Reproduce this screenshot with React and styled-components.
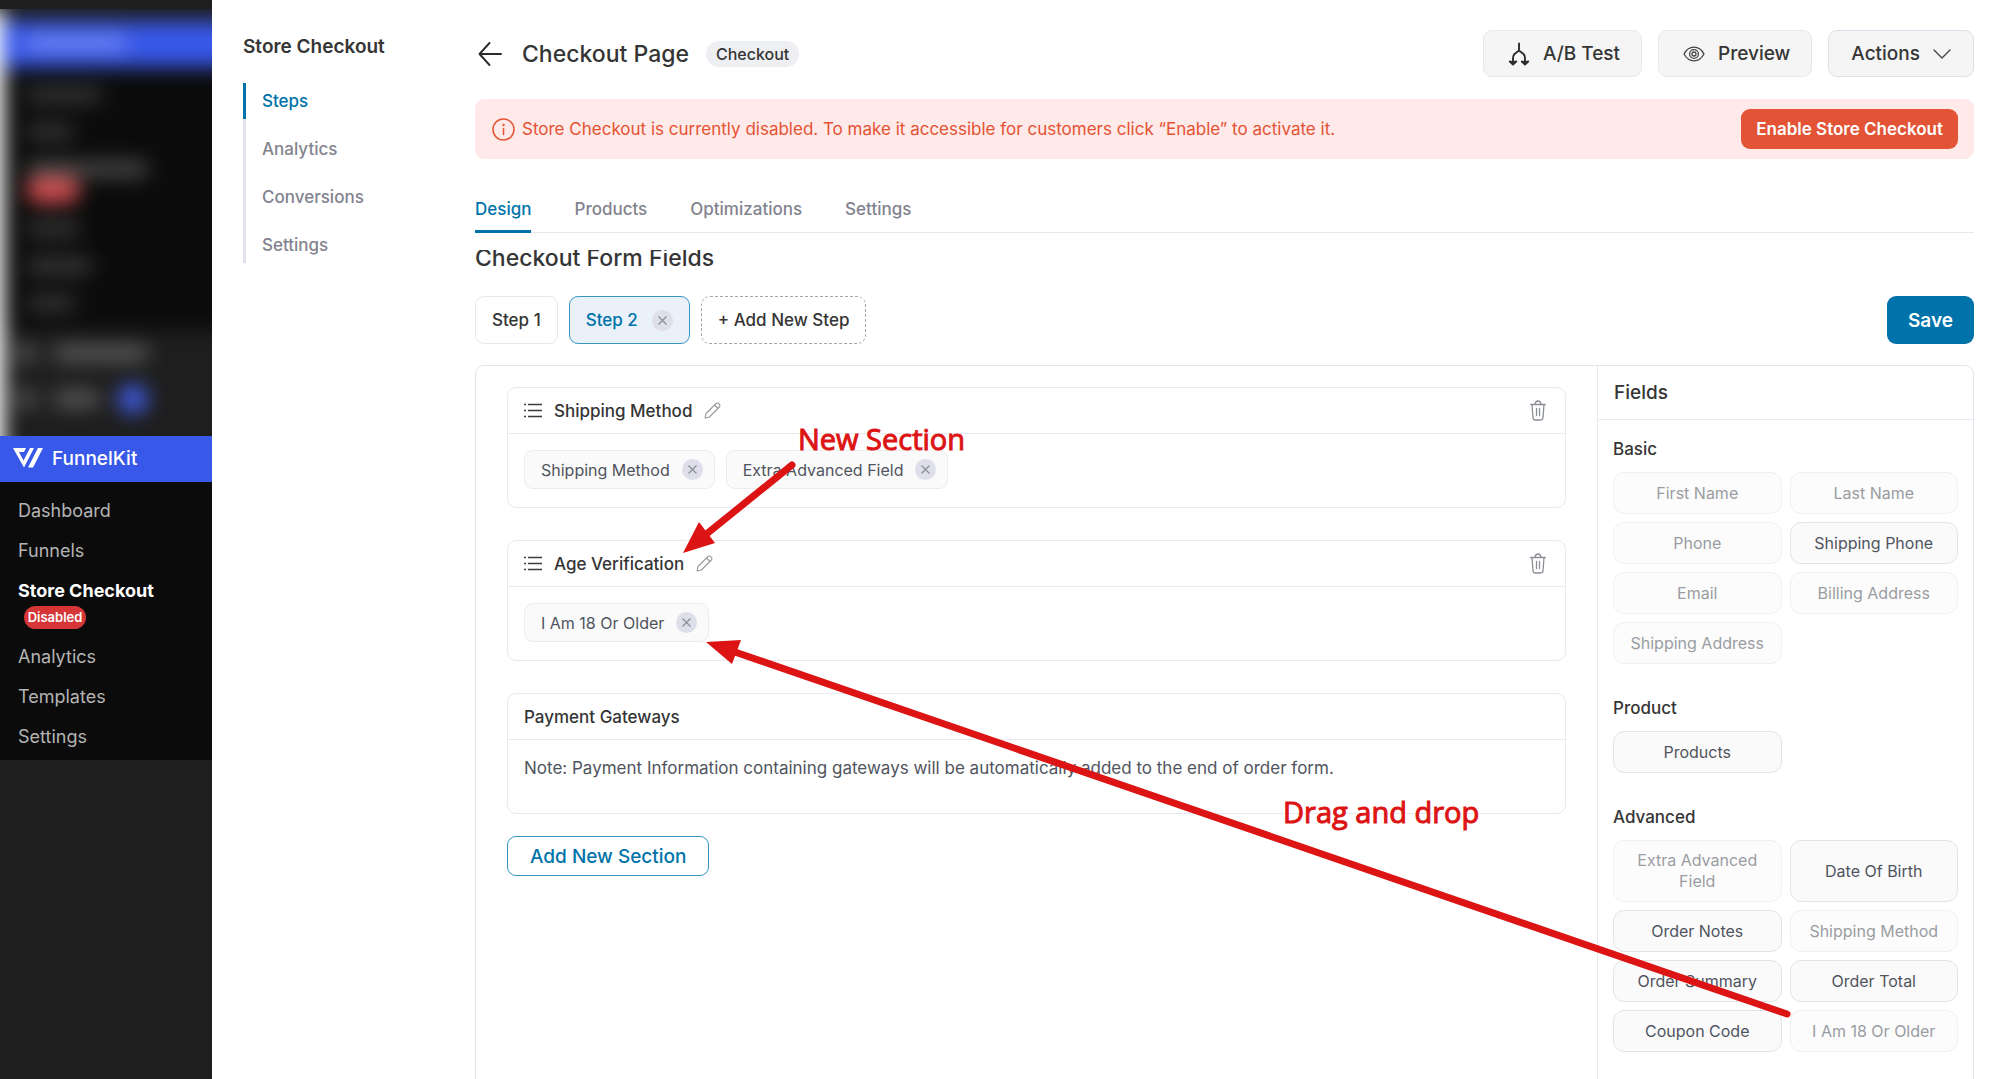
import React, { useState } from "react";
import styled, { createGlobalStyle } from "styled-components";

const adminLinks = [
  { title: "Dashboard" },
  { title: "Funnels" },
  { title: "Store Checkout", active: true, badge: "Disabled" },
  { title: "Analytics" },
  { title: "Templates" },
  { title: "Settings" },
];

const storeLinks = ["Steps", "Analytics", "Conversions", "Settings"];

const tabs = ["Design", "Products", "Optimizations", "Settings"];

const sections = [
  { title: "Shipping Method", fields: ["Shipping Method", "Extra Advanced Field"] },
  { title: "Age Verification", fields: ["I Am 18 Or Older"] },
];

const fieldGroups = [
  {
    title: "Basic",
    fields: [
      { title: "First Name", used: true },
      { title: "Last Name", used: true },
      { title: "Phone", used: true },
      { title: "Shipping Phone" },
      { title: "Email", used: true },
      { title: "Billing Address", used: true },
      { title: "Shipping Address", used: true },
    ],
  },
  { title: "Product", fields: [{ title: "Products" }] },
  {
    title: "Advanced",
    fields: [
      { title: "Extra Advanced Field", used: true },
      { title: "Date Of Birth" },
      { title: "Order Notes" },
      { title: "Shipping Method", used: true },
      { title: "Order Summary" },
      { title: "Order Total" },
      { title: "Coupon Code" },
      { title: "I Am 18 Or Older", used: true },
    ],
  },
];

const FunnelKitLogo = () => (
  <svg width="30" height="20" viewBox="0 0 30 20" fill="#fff" aria-hidden="true">
    <path d="M0 0H13L11 4H6L10.500 12.500L17 0H21L11 19.500Z" />
    <path d="M25 0H30L20 19.500H15Z" />
  </svg>
);

const BackIcon = () => (
  <svg width="24" height="26" viewBox="0 0 24 26" fill="none" stroke="#2c2c2c" strokeWidth="1.9" strokeLinecap="round" strokeLinejoin="round" aria-hidden="true">
    <path d="M23 13H1.500M11.500 2L1.500 13L11.500 24" />
  </svg>
);

const SplitIcon = () => (
  <svg width="22" height="24" viewBox="0 0 22 24" fill="none" stroke="#2c2c2c" strokeWidth="1.9" strokeLinecap="round" strokeLinejoin="round" aria-hidden="true">
    <path d="M11 1.500V8.500L6.500 12Q5 13.500 5 16V21M11 8.500L15.500 12Q17 13.500 17 16V21" />
    <path fill="#2c2c2c" d="M1.800 19.500L5 22.500L8.200 19.500L5 20.500ZM13.800 19.500L17 22.500L20.200 19.500L17 20.500Z" />
  </svg>
);

const EyeIcon = () => (
  <svg width="22" height="16" viewBox="0 0 22 16" fill="none" stroke="#444" strokeWidth="1.3" aria-hidden="true">
    <path d="M1 8C3.500 3.500 7 1.200 11 1.200S18.500 3.500 21 8C18.500 12.500 15 14.800 11 14.800S3.500 12.500 1 8Z" />
    <circle cx="11" cy="8" r="4.400" />
    <circle cx="11" cy="8" r="2" />
  </svg>
);

const ChevronIcon = () => (
  <svg width="18" height="10" viewBox="0 0 18 10" fill="none" stroke="#444" strokeWidth="1.3" strokeLinecap="round" strokeLinejoin="round" aria-hidden="true">
    <path d="M1 1L9 9L17 1" />
  </svg>
);

const InfoIcon = () => (
  <svg width="23" height="23" viewBox="0 0 23 23" fill="none" stroke="#e45333" strokeWidth="1.5" strokeLinecap="round" aria-hidden="true">
    <circle cx="11.500" cy="11.500" r="10.500" />
    <path d="M11.500 10.500V16.500" />
    <circle cx="11.500" cy="7" r="0.500" />
  </svg>
);

const ListIcon = () => (
  <svg width="18" height="15" viewBox="0 0 18 15" fill="none" stroke="#3c3c3c" strokeWidth="1.600" aria-hidden="true">
    <path d="M4 1.500H18M4 7.500H18M4 13.500H18M0 1.500H2M0 7.500H2M0 13.500H2" />
  </svg>
);

const PencilIcon = () => (
  <svg width="17" height="17" viewBox="0 0 17 17" fill="none" stroke="#999" strokeWidth="1.100" strokeLinejoin="round" aria-hidden="true">
    <path d="M1 16L2 11.500L12 1.500Q13.500 0.300 15 1.800Q16.600 3.400 15.400 5L5.400 15Z" />
    <path d="M10.500 3L14 6.500" />
  </svg>
);

const TrashIcon = () => (
  <svg width="16" height="21" viewBox="0 0 16 21" fill="none" stroke="#8c8e96" strokeWidth="1.300" strokeLinecap="round" strokeLinejoin="round" aria-hidden="true">
    <path d="M0.700 4.500H15.300M5 4.200Q5.300 1 8 1T11 4.200M2 4.800L3 17.800Q3.200 20 5.200 20H10.800Q12.800 20 13 17.800L14 4.800M6.500 8.500V15.500M9.500 8.500V15.500" />
  </svg>
);

const CrossIcon = () => (
  <svg width="9" height="9" viewBox="0 0 9 9" fill="none" stroke="#8c8e96" strokeWidth="1.200" aria-hidden="true">
    <path d="M0.500 0.500L8.500 8.500M8.500 0.500L0.500 8.500" />
  </svg>
);

const BlurredMenu = () => (
  <StyledBlurArea aria-hidden="true">
    <StyledBlurLayer>
      <StyledBlurBrand>
        <StyledSmudge $width={100} $color="#6f86f0" />
      </StyledBlurBrand>
      <StyledBlurSubmenu>
        <StyledSmudge $width={76} $color="#363636" />
        <StyledSmudge $width={48} $color="#363636" />
        <StyledSmudge $width={122} $color="#4a4a4a" />
        <StyledSmudgeBadge />
        <StyledSmudge $width={54} $color="#363636" />
        <StyledSmudge $width={66} $color="#3a3a3a" />
        <StyledSmudge $width={50} $color="#363636" />
      </StyledBlurSubmenu>
      <StyledBlurRow>
        <StyledSmudge $width={20} $color="#5c5c5c" />
        <StyledSmudge $width={94} $color="#5c5c5c" />
      </StyledBlurRow>
      <StyledBlurRow>
        <StyledSmudge $width={20} $color="#5c5c5c" />
        <StyledSmudge $width={46} $color="#5c5c5c" />
        <StyledSmudgeCount />
      </StyledBlurRow>
    </StyledBlurLayer>
  </StyledBlurArea>
);

const AdminSidebar = () => (
  <StyledAdminSidebar>
    <BlurredMenu />
    <StyledBrand href="#funnelkit">
      <FunnelKitLogo />
      FunnelKit
    </StyledBrand>
    <StyledAdminNav aria-label="FunnelKit">
      {adminLinks.map((link) => (
        <StyledAdminLink href="#admin" key={link.title} $active={link.active}>
          {link.title}
          {link.badge && <StyledDisabledBadge>{link.badge}</StyledDisabledBadge>}
        </StyledAdminLink>
      ))}
    </StyledAdminNav>
  </StyledAdminSidebar>
);

const StoreMenu = () => (
  <StyledStoreMenu>
    <StyledStoreTitle>Store Checkout</StyledStoreTitle>
    <StyledStoreNav aria-label="Store Checkout">
      {storeLinks.map((title) => (
        <StyledStoreLink href="#store" key={title} $active={title === "Steps"}>
          {title}
        </StyledStoreLink>
      ))}
    </StyledStoreNav>
  </StyledStoreMenu>
);

const FieldChip = ({ title }) => (
  <StyledFieldChip>
    {title}
    <StyledRemoveButton aria-label={`Remove ${title}`}>
      <CrossIcon />
    </StyledRemoveButton>
  </StyledFieldChip>
);

const FormBuilder = () => (
  <StyledFormBuilder>
    {sections.map((section) => (
      <StyledSection key={section.title}>
        <StyledSectionHeader>
          <ListIcon />
          <StyledSectionTitle>{section.title}</StyledSectionTitle>
          <StyledIconButton aria-label={`Edit ${section.title}`}>
            <PencilIcon />
          </StyledIconButton>
          <StyledDeleteButton aria-label={`Delete ${section.title}`}>
            <TrashIcon />
          </StyledDeleteButton>
        </StyledSectionHeader>
        <StyledSectionBody>
          {section.fields.map((field) => (
            <FieldChip key={field} title={field} />
          ))}
        </StyledSectionBody>
      </StyledSection>
    ))}
    <StyledSection>
      <StyledSectionHeader>
        <StyledSectionTitle>Payment Gateways</StyledSectionTitle>
      </StyledSectionHeader>
      <StyledSectionBody>
        <StyledNote>
          Note: Payment Information containing gateways will be automatically
          added to the end of order form.
        </StyledNote>
      </StyledSectionBody>
    </StyledSection>
    <StyledAddSection>Add New Section</StyledAddSection>
  </StyledFormBuilder>
);

const FieldsPanel = () => (
  <StyledFieldsPanel>
    <StyledFieldsTitle>Fields</StyledFieldsTitle>
    {fieldGroups.map((group) => (
      <StyledFieldGroup key={group.title}>
        <StyledGroupTitle>{group.title}</StyledGroupTitle>
        <StyledFieldGrid>
          {group.fields.map((field) => (
            <StyledFieldButton key={field.title} disabled={field.used}>
              {field.title}
            </StyledFieldButton>
          ))}
        </StyledFieldGrid>
      </StyledFieldGroup>
    ))}
  </StyledFieldsPanel>
);

// Red tutorial notes drawn over the page
const Annotations = () => (
  <StyledAnnotations width="1999" height="1079" viewBox="0 0 1999 1079">
    <line x1="792" y1="465" x2="704" y2="536" />
    <polygon points="683,553 699,522 715,543" />
    <line x1="1787" y1="1014" x2="732" y2="651" />
    <polygon points="706,642 741,640 732,664" />
    <text x="798" y="450">New Section</text>
    <text x="1283" y="823">Drag and drop</text>
  </StyledAnnotations>
);

const App = () => {
  const [activeTab, setActiveTab] = useState("Design");

  return (
    <StyledPage>
      <GlobalStyle />
      <AdminSidebar />
      <StoreMenu />
      <StyledMain>
        <StyledHeader>
          <StyledBackLink href="#back" aria-label="Back">
            <BackIcon />
          </StyledBackLink>
          <StyledPageTitle>Checkout Page</StyledPageTitle>
          <StyledTypeBadge>Checkout</StyledTypeBadge>
          <StyledHeaderActions>
            <StyledHeaderButton>
              <SplitIcon />
              A/B Test
            </StyledHeaderButton>
            <StyledHeaderButton>
              <EyeIcon />
              Preview
            </StyledHeaderButton>
            <StyledHeaderButton $menu>
              Actions
              <ChevronIcon />
            </StyledHeaderButton>
          </StyledHeaderActions>
        </StyledHeader>
        <StyledBanner>
          <InfoIcon />
          <StyledBannerText>
            Store Checkout is currently disabled. To make it accessible for
            customers click “Enable” to activate it.
          </StyledBannerText>
          <StyledEnableButton>Enable Store Checkout</StyledEnableButton>
        </StyledBanner>
        <StyledTabs>
          {tabs.map((tab) => (
            <StyledTab
              key={tab}
              $active={tab === activeTab}
              onClick={() => setActiveTab(tab)}
            >
              {tab}
            </StyledTab>
          ))}
        </StyledTabs>
        <StyledFormTitle>Checkout Form Fields</StyledFormTitle>
        <StyledStepsRow>
          <StyledStep>Step 1</StyledStep>
          <StyledActiveStep>
            Step 2
            <StyledRemoveButton aria-label="Remove Step 2">
              <CrossIcon />
            </StyledRemoveButton>
          </StyledActiveStep>
          <StyledAddStep>+ Add New Step</StyledAddStep>
          <StyledSaveButton>Save</StyledSaveButton>
        </StyledStepsRow>
        <StyledPanel>
          <FormBuilder />
          <FieldsPanel />
        </StyledPanel>
      </StyledMain>
      <Annotations />
    </StyledPage>
  );
};

const GlobalStyle = createGlobalStyle`
  * {
    box-sizing: border-box;
  }

  body {
    margin: 0;
    background: #fff;
    color: #353535;
    font-family: Inter, "Liberation Sans", sans-serif;
    font-size: 17px;
  }

  h1, h2, h3, p {
    margin: 0;
  }

  a {
    text-decoration: none;
  }

  button {
    font-family: inherit;
    cursor: pointer;
  }

  svg {
    flex-shrink: 0;
  }
`;
const StyledPage = styled.div`
  position: relative;
  display: flex;
  height: 100vh;
  overflow: hidden;
`;
const StyledAdminSidebar = styled.aside`
  width: 212px;
  flex-shrink: 0;
  background: #1e1e1e;
`;
const StyledBlurArea = styled.div`
  height: 427px;
  margin-top: 9px;
  overflow: hidden;
`;
const StyledBlurLayer = styled.div`
  height: 460px;
  margin-right: -30px;
  padding-top: 12px;
  border-left: 4px solid #fff;
  background: #1e1e1e;
  box-shadow: -30px 0 0 #fff;
  filter: blur(10px);
`;
const StyledBlurBrand = styled.div`
  height: 46px;
  padding: 14px 22px;
  background: #3858e9;
  box-shadow: -4px 0 0 #c9dcff;
`;
const StyledBlurSubmenu = styled.div`
  display: flex;
  flex-direction: column;
  gap: 21px;
  height: 263px;
  padding: 20px 22px;
  background: #0b0b0b;
`;
const StyledBlurRow = styled.div`
  display: flex;
  align-items: center;
  gap: 18px;
  height: 46px;
  padding-left: 12px;
`;
const StyledSmudge = styled.div`
  width: ${(props) => props.$width}px;
  height: 16px;
  flex-shrink: 0;
  border-radius: 6px;
  background: ${(props) => props.$color};
`;
const StyledSmudgeBadge = styled.div`
  width: 54px;
  height: 26px;
  margin: -21px 0 -3px;
  flex-shrink: 0;
  border-radius: 13px;
  background: #cf4d50;
`;
const StyledSmudgeCount = styled.div`
  width: 30px;
  height: 30px;
  border-radius: 50%;
  background: #3f5be0;
`;
const StyledBrand = styled.a`
  display: flex;
  align-items: center;
  gap: 9px;
  height: 46px;
  padding: 0 0 2px 13px;
  background: #3858e9;
  color: #fff;
  font-size: 19px;
  font-weight: 500;
`;
const StyledAdminNav = styled.nav`
  display: flex;
  flex-direction: column;
  gap: 16px;
  padding: 17px 18px 11px;
  background: #0b0b0b;
`;
const StyledAdminLink = styled.a`
  color: ${(props) => (props.$active ? "#fff" : "#b4b4b4")};
  font-size: 18px;
  font-weight: ${(props) => (props.$active ? 700 : 400)};
  line-height: 24px;
`;
const StyledDisabledBadge = styled.span`
  display: block;
  width: 62px;
  height: 23px;
  margin: 3px 0 0 6px;
  border-radius: 12px;
  background: #d63638;
  font-size: 13px;
  font-weight: 600;
  line-height: 23px;
  text-align: center;
`;
const StyledStoreMenu = styled.aside`
  width: 263px;
  flex-shrink: 0;
  padding: 35px 31px;
`;
const StyledStoreTitle = styled.h2`
  font-size: 19px;
  font-weight: 600;
  line-height: 24px;
`;
const StyledStoreNav = styled.nav`
  display: flex;
  flex-direction: column;
  gap: 12px;
  margin-top: 24px;
  box-shadow: inset 3px 0 0 #e2e2ee;
`;
const StyledStoreLink = styled.a`
  padding-left: 16px;
  border-left: 3px solid
    ${(props) => (props.$active ? "#0073aa" : "transparent")};
  color: ${(props) => (props.$active ? "#0073aa" : "#82838e")};
  font-weight: 500;
  line-height: 36px;
`;
const StyledMain = styled.main`
  flex: 1;
  min-width: 0;
  padding: 30px 25px 0 0;
`;
const StyledHeader = styled.header`
  display: flex;
  align-items: center;
`;
const StyledBackLink = styled.a`
  display: flex;
  padding: 0 20px 0 3px;
`;
const StyledPageTitle = styled.h1`
  font-size: 23px;
  font-weight: 500;
  line-height: 28px;
`;
const StyledTypeBadge = styled.span`
  margin-left: 17px;
  padding: 0 10px;
  border-radius: 13px;
  background: #edeff3;
  font-size: 16px;
  font-weight: 500;
  line-height: 26px;
`;
const StyledHeaderActions = styled.div`
  display: flex;
  gap: 16px;
  margin-left: auto;
`;
const StyledHeaderButton = styled.button`
  display: flex;
  align-items: center;
  gap: 13px;
  height: 47px;
  padding: 0 ${(props) => (props.$menu ? 22 : 21)}px 0
    ${(props) => (props.$menu ? 22 : 24)}px;
  border: 1px solid ${(props) => (props.$menu ? "#dedfea" : "#e8e8e8")};
  border-radius: 9px;
  background: #f5f5f5;
  color: #353535;
  font-size: 19px;
  font-weight: 500;
`;
const StyledBanner = styled.div`
  display: flex;
  align-items: center;
  gap: 7px;
  height: 60px;
  margin-top: 22px;
  padding: 0 16px 0 17px;
  border-radius: 9px;
  background: #ffe9e9;
`;
const StyledBannerText = styled.p`
  flex: 1;
  color: #e45333;
  line-height: 24px;
`;
const StyledEnableButton = styled.button`
  height: 40px;
  padding: 0 15px;
  border: 0;
  border-radius: 9px;
  background: #e35335;
  color: #fff;
  font-size: 17px;
  font-weight: 600;
`;
const StyledTabs = styled.div`
  display: flex;
  gap: 43px;
  margin-top: 34px;
  box-shadow: inset 0 -1px 0 #e6e8ee;
`;
const StyledTab = styled.button`
  height: 40px;
  padding: 0 0 6px;
  border: 0;
  border-bottom: 3px solid
    ${(props) => (props.$active ? "#0073aa" : "transparent")};
  background: none;
  color: ${(props) => (props.$active ? "#0073aa" : "#82838e")};
  font-size: 17px;
  font-weight: 500;
`;
const StyledFormTitle = styled.h2`
  display: flex;
  align-items: flex-end;
  height: 23px;
  margin-top: 17px;
  overflow: hidden;
  font-size: 23px;
  font-weight: 500;
  line-height: 30px;
`;
const StyledStepsRow = styled.div`
  display: flex;
  gap: 11px;
  margin-top: 23px;
`;
const StyledStep = styled.button`
  height: 48px;
  padding: 0 16px;
  border: 1px solid #e6e8ee;
  border-radius: 9px;
  background: #fff;
  color: #353535;
  font-size: 17px;
  font-weight: 500;
`;
const StyledActiveStep = styled.div`
  display: flex;
  align-items: center;
  gap: 14px;
  height: 48px;
  padding: 0 16px;
  border: 1px solid #3a96c4;
  border-radius: 9px;
  background: #eaf1f8;
  color: #0073aa;
  font-weight: 500;
`;
const StyledAddStep = styled(StyledStep)`
  border: 1px dashed #a5a5a5;
`;
const StyledSaveButton = styled(StyledStep)`
  margin-left: auto;
  padding: 0 21px;
  border: 0;
  background: #0073aa;
  color: #fff;
  font-size: 19px;
  font-weight: 600;
`;
const StyledRemoveButton = styled.button`
  display: flex;
  align-items: center;
  justify-content: center;
  width: 21px;
  height: 21px;
  padding: 0;
  border: 0;
  border-radius: 50%;
  background: #dedfea;
`;
const StyledPanel = styled.div`
  display: flex;
  min-height: 100vh;
  margin-top: 21px;
  border: 1px solid #e4e5ef;
  border-radius: 9px;
`;
const StyledFormBuilder = styled.div`
  flex: 1;
  min-width: 0;
  padding: 21px 31px;
`;
const StyledSection = styled.section`
  min-height: 121px;
  margin-bottom: 32px;
  border: 1px solid #e8e9f1;
  border-radius: 9px;

  &:last-of-type {
    margin-bottom: 22px;
  }
`;
const StyledSectionHeader = styled.div`
  display: flex;
  align-items: center;
  gap: 12px;
  height: 46px;
  padding: 0 19px 0 16px;
  border-bottom: 1px solid #e8e9f1;
`;
const StyledSectionTitle = styled.h3`
  font-size: 17px;
  font-weight: 500;
  line-height: 24px;
`;
const StyledIconButton = styled.button`
  display: flex;
  padding: 0;
  border: 0;
  background: none;
`;
const StyledDeleteButton = styled(StyledIconButton)`
  margin-left: auto;
`;
const StyledSectionBody = styled.div`
  display: flex;
  gap: 11px;
  padding: 16px;
`;
const StyledFieldChip = styled.div`
  display: flex;
  align-items: center;
  gap: 12px;
  height: 39px;
  padding: 0 11px 0 16px;
  border: 1px solid #ececee;
  border-radius: 9px;
  background: #fafafa;
  color: #50545e;
  font-size: 16px;
`;
const StyledNote = styled.p`
  color: #50545e;
  line-height: 24px;
`;
const StyledAddSection = styled.button`
  height: 40px;
  padding: 0 22px;
  border: 1px solid #3a96c4;
  border-radius: 9px;
  background: #fff;
  color: #0073aa;
  font-size: 19px;
  font-weight: 500;
`;
const StyledFieldsPanel = styled.aside`
  width: 376px;
  flex-shrink: 0;
  border-left: 1px solid #e8e9f1;
`;
const StyledFieldsTitle = styled.h2`
  height: 54px;
  padding-left: 16px;
  border-bottom: 1px solid #e8e9f1;
  font-size: 19px;
  font-weight: 500;
  line-height: 54px;
`;
const StyledFieldGroup = styled.section`
  padding: 17px 15px 15px;
`;
const StyledGroupTitle = styled.h3`
  margin-bottom: 11px;
  font-size: 17px;
  font-weight: 500;
  line-height: 24px;
`;
const StyledFieldGrid = styled.div`
  display: grid;
  grid-template-columns: 1fr 1fr;
  gap: 8px;
`;
const StyledFieldButton = styled.button`
  min-height: 42px;
  padding: 9px 15px;
  border: 1px solid #e4e4e6;
  border-radius: 11px;
  background: #fafafa;
  color: #50545e;
  font-size: 16px;
  line-height: 21px;

  &:disabled {
    border-color: #f0f0f1;
    background: #fcfcfc;
    color: #9a9ca2;
  }
`;
const StyledAnnotations = styled.svg`
  position: absolute;
  top: 0;
  left: 0;
  pointer-events: none;

  line {
    stroke: #dd1414;
    stroke-width: 7px;
    stroke-linecap: round;
  }

  polygon,
  text {
    fill: #dd1414;
  }

  text {
    font-family: "Open Sans", sans-serif;
    font-size: 29px;
    stroke: #dd1414;
    stroke-width: 1px;
  }
`;
export default App;
